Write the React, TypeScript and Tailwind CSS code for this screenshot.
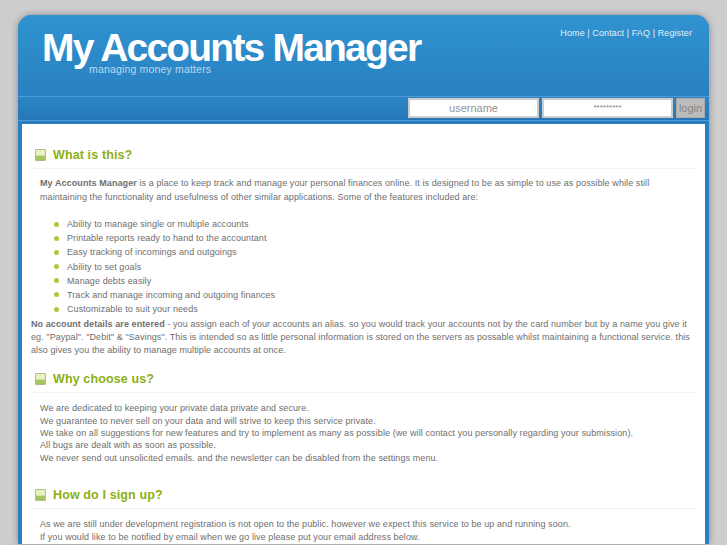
const bodyFont = "font-['Liberation_Sans',Arial,sans-serif]";

const features = [
  "Ability to manage single or multiple accounts",
  "Printable reports ready to hand to the accountant",
  "Easy tracking of incomings and outgoings",
  "Ability to set goals",
  "Manage debts easily",
  "Track and manage incoming and outgoing finances",
  "Customizable to suit your needs",
];

function Heading({ children }: { children: string }) {
  return (
    <h2 className="flex h-[24px] items-center gap-[7px] border-b border-[#f2f2f2] pb-[3px] pl-[4px] text-[12.5px] font-bold tracking-[0.12px] text-[#8ab014]">
      <span className="h-[12px] w-[11px] rounded-[1px] border border-[#a9c186] bg-gradient-to-b from-[#e6f2c0] from-50% to-[#a3c45f] to-65%" />
      {children}
    </h2>
  );
}

export default function App() {
  return (
    <div className={`h-[545px] overflow-hidden bg-[#cdcdcd] pt-[15px] ${bodyFont}`}>
      <div className="ml-[18px] w-[691px] rounded-t-[14px] bg-[#2a7fc1] shadow-[0_0_7px_rgba(0,0,0,0.35)]">
        <header className="relative h-[81px] rounded-t-[14px] bg-gradient-to-b from-[#2f93cf] to-[#2a80c2] pl-[24px] pt-[17px]">
          <h1 className="text-[39px] font-bold leading-[32px] tracking-[-1.8px] text-white">
            My Accounts Manager
          </h1>
          <p className="pl-[47px] text-[10.5px] leading-[10px] tracking-[0.17px] text-[#bcd9ef]">
            managing money matters
          </p>
          <nav className="absolute right-[17px] top-[12px] text-[9px] leading-[12px] tracking-[0.1px] text-[#e4f0f9]">
            Home | Contact | FAQ | Register
          </nav>
        </header>
        <div className="flex h-[25px] items-center justify-end gap-[3px] border-y border-[#4d9ad6] bg-gradient-to-b from-[#2b85c6] to-[#2577b9] pb-[1px] pr-[4px]">
          <div className="flex h-[20px] w-[131px] items-center justify-center border-2 border-[#cccccc] bg-white text-[11px] text-[#929292]">
            username
          </div>
          <div className="flex h-[20px] w-[131px] items-center justify-center border-2 border-[#cccccc] bg-white text-[8px] text-[#808080]">
            *********
          </div>
          <div className="flex h-[20px] w-[29px] items-center justify-center border border-[#aaa] bg-[#bcbcbc] text-[11px] text-[#858585]">
            login
          </div>
        </div>
        <div className="px-[4px] pt-[3px]">
          <main className="bg-white px-[9px] pt-[21px] text-[9px] tracking-[0.09px] text-[#6e6e6e]">
            <Heading>What is this?</Heading>
            <p className="mt-[7px] pl-[9px] leading-[14px]">
              <strong>My Accounts Manager</strong> is a place to keep track and manage your personal finances online. It is designed to be as simple to use as possible while still maintaining the functionality and usefulness of other similar applications. Some of the features included are:
            </p>
            <ul className="mt-[13px] pl-[23px] leading-[14.17px]">
              {features.map((feature) => (
                <li key={feature} className="flex items-center gap-[8px]">
                  <span className="h-[5px] w-[5px] rounded-full bg-[#a9c93e]" />
                  {feature}
                </li>
              ))}
            </ul>
            <p className="mt-[2px] leading-[13px]">
              <strong>No account details are entered</strong> - you assign each of your accounts an alias. so you would track your accounts not by the card number but by a name you give it eg. "Paypal". "Debit" &amp; "Savings". This is intended so as little personal information is stored on the servers as possable whilst maintaining a functional service. this also gives you the ability to manage multiple accounts at once.
            </p>
            <div className="mt-[12px]">
              <Heading>Why choose us?</Heading>
            </div>
            <p className="mt-[9px] pl-[9px] leading-[12.4px]">
              We are dedicated to keeping your private data private and secure.
              <br />
              We guarantee to never sell on your data and will strive to keep this service private.
              <br />
              We take on all suggestions for new features and try to implement as many as possible (we will contact you personally regarding your submission).
              <br />
              All bugs are dealt with as soon as possible.
              <br />
              We never send out unsolicited emails. and the newsletter can be disabled from the settings menu.
            </p>
            <div className="mt-[21px]">
              <Heading>How do I sign up?</Heading>
            </div>
            <p className="mt-[9px] pl-[9px] leading-[13px]">
              As we are still under development registration is not open to the public. however we expect this service to be up and running soon.
              <br />
              If you would like to be notified by email when we go live please put your email address below.
            </p>
          </main>
        </div>
      </div>
    </div>
  );
}
